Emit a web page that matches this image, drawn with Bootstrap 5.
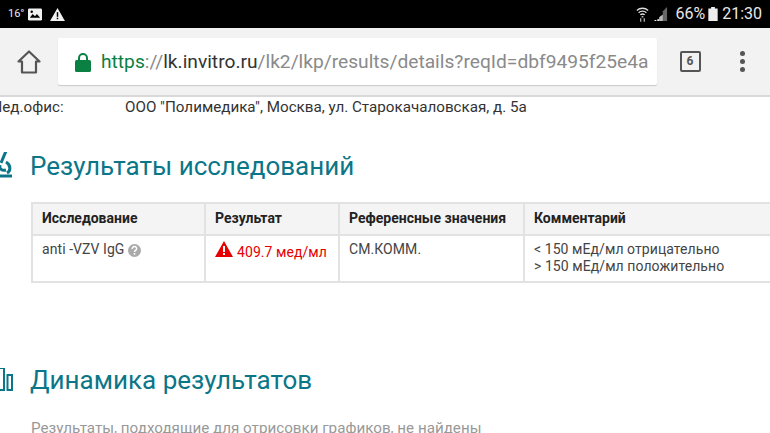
<!DOCTYPE html>
<html lang="ru">
<head>
  <meta charset="UTF-8">
  <meta name="viewport" content="width=device-width, initial-scale=1">
  <title>Результаты исследований</title>
  <link href="https://cdn.jsdelivr.net/npm/bootstrap@5.3.0/dist/css/bootstrap.min.css" rel="stylesheet">
  <style>
    html, body { height: 433px; overflow: hidden; }
    body { font-family: Roboto, "Liberation Sans", sans-serif; background: #fff; color: #333; }
    .status-bar { height: 28px; background: #000; color: #e8e8e8; padding: 0 8px 0 8px; }
    .status-temp { font-size: 11px; width: 20px; }
    .status-text { font-size: 16px; line-height: 28px; }
    .status-signal { margin-left: 5px; margin-right: 7px; }
    .status-batt { margin-left: 3px; }
    .browser-bar { height: 69px; background: #f2f2f2; border-bottom: 2px solid #d9d9d9; }
    .home-slot { width: 58px; }
    .url-box { width: 599px; height: 47px; background: #fff; border-radius: 2px; box-shadow: 0 1px 1px #c8c8c8; padding: 2px 9px 0 17px; white-space: nowrap; font-size: 19.2px; color: #8a8a8a; }
    .url-box svg { flex: none; margin-right: 10px; }
    .url-text { overflow: hidden; min-width: 0; }
    .url-https { color: #0b8043; }
    .url-host { color: #333; }
    .tab-slot { width: 66px; }
    .tab-count { width: 21px; height: 21px; border: 2px solid #555; border-radius: 2px; font-size: 12px; font-weight: 700; color: #555; line-height: 17px; }
    .menu-slot { width: 38px; }
    .menu-dots { gap: 3px; }
    .menu-dots i { display: block; width: 5px; height: 5px; border-radius: 50%; background: #555; }
    .office-line { height: 24px; font-size: 15.2px; line-height: 20px; color: #333; margin-left: -11px; white-space: nowrap; }
    .office-label { width: 136px; flex: none; }
    .section-title { font-size: 26px; font-weight: 400; line-height: 32px; color: #0a7688; margin: 0; }
    .section-head { gap: 17px; }
    .section-head svg { flex: none; }
    .head-one { margin-top: 29px; }
    .head-two { margin-top: 81px; }
    .results-table { margin: 20px 0 0 31px; width: 760px; table-layout: fixed; border-collapse: collapse; font-size: 14px; color: #444; }
    .results-table th, .results-table td { border: 2px solid #e2e2e2; padding: 4px 9px; vertical-align: top; }
    .results-table th { background: #f4f4f4; color: #222; font-weight: 700; height: 32px; }
    .results-table td { height: 47px; padding-top: 5px; line-height: 17px; letter-spacing: .07px; }
    .result-bad { color: #e60000; white-space: nowrap; }
    .result-bad svg { flex: none; }
    .result-bad span { margin-top: 3px; }
    .note-text { font-size: 15.2px; color: #999; margin: 22px 0 0 31px; line-height: 20px; }
  </style>
</head>
<body>

<div class="status-bar d-flex align-items-center">
  <span class="status-temp">16°</span>
  <svg width="14" height="13" viewBox="0 0 15 13"><rect width="15" height="13" rx="1.5" fill="#f2f2f2"/><path d="M2 10l3-4 2.500 2.500L9.500 6 13 10z" fill="#000"/><circle cx="4" cy="3.500" r="1.300" fill="#000"/></svg>
  <svg width="15" height="13" viewBox="0 0 16 14" class="ms-2"><path d="M8 0l8 14H0z" fill="#f2f2f2"/><rect x="7.200" y="4.500" width="1.600" height="5" fill="#000"/><rect x="7.200" y="10.500" width="1.600" height="1.600" fill="#000"/></svg>
  <div class="ms-auto d-flex align-items-center">
    <svg width="13" height="16" viewBox="0 0 15 18" fill="none" stroke="#ddd" stroke-width="1.500"><path d="M1 5c3.500-3.500 9.500-3.500 13 0M3 7.500c2.500-2.300 6.500-2.300 9 0M5 10c1.500-1.200 3.500-1.200 5 0"/><path d="M7.500 11.500v1.500" stroke-width="2"/><path d="M5.500 14v4M9.500 14v4" stroke-width="1.200"/></svg>
    <svg width="14" height="14" viewBox="0 0 14 15" class="status-signal"><path d="M13.500 0v15H9V4.500z" fill="#666"/><path d="M9 8v7H5v-4z" fill="#bbb"/><path d="M3 13h2v2H3zM0 14h2v1H0z" fill="#eee"/></svg>
    <span class="status-text">66%</span>
    <svg width="10" height="14" viewBox="0 0 10 15" class="status-batt"><path d="M3 0h4v1.500h3V15H0V1.500h3z" fill="#eee"/></svg>
    <span class="status-text ms-1">21:30</span>
  </div>
</div>

<div class="browser-bar d-flex align-items-center">
  <div class="home-slot d-flex justify-content-center">
    <svg width="24" height="24" viewBox="0 0 24 24" fill="none" stroke="#555" stroke-width="2.200" stroke-linejoin="round"><path d="M1.500 11.500L12 1.500l10.500 10H19v11H5v-11z"/></svg>
  </div>
  <div class="url-box d-flex align-items-center">
    <svg width="16" height="19" viewBox="0 0 16 19"><path d="M4 8V5a4 4 0 018 0v3" fill="none" stroke="#0b8043" stroke-width="2"/><rect y="7" width="16" height="12" rx="1.500" fill="#0b8043"/></svg>
    <span class="url-text"><span class="url-https">https</span>://<span class="url-host">lk.invitro.ru</span>/lk2/lkp/results/details?reqId=dbf9495f25e4a</span>
  </div>
  <div class="tab-slot d-flex justify-content-center">
    <div class="tab-count text-center">6</div>
  </div>
  <div class="menu-slot d-flex flex-column align-items-center menu-dots">
    <i></i><i></i><i></i>
  </div>
</div>

<div class="office-line d-flex">
  <span class="office-label">Мед.офис:</span>
  <span>ООО "Полимедика", Москва, ул. Старокачаловская, д. 5а</span>
</div>

<div class="section-head head-one d-flex align-items-center">
  <svg width="13" height="28" viewBox="0 2 13 28" fill="none" stroke="#0a7688" stroke-width="3"><path d="M6 1L1 13"/><path d="M6 12c5 3 5 9 1 11"/><path d="M0 15c-1 4 2 6 6 5"/><path d="M-1 26h13"/></svg>
  <h2 class="section-title">Результаты исследований</h2>
</div>

<table class="results-table">
  <colgroup><col style="width:173px"><col style="width:134px"><col style="width:185px"><col></colgroup>
  <thead>
    <tr><th>Исследование</th><th>Результат</th><th>Референсные значения</th><th>Комментарий</th></tr>
  </thead>
  <tbody>
    <tr>
      <td>anti -VZV IgG
        <svg width="13" height="13" viewBox="0 0 13 13"><circle cx="6.500" cy="6.500" r="6.500" fill="#aaa"/><path d="M4.300 5a2.200 2 0 114 .6c-.5.8-1.800 1-1.800 2.300" fill="none" stroke="#fff" stroke-width="1.500"/><rect x="5.700" y="9" width="1.600" height="1.700" fill="#fff"/></svg>
      </td>
      <td>
        <div class="result-bad d-flex align-items-start gap-1">
          <svg width="18" height="16" viewBox="0 0 18 16"><path d="M9 0l9 16H0z" fill="#e60000"/><rect x="8" y="5" width="2" height="6" fill="#fff"/><rect x="8" y="12" width="2" height="2" fill="#fff"/></svg>
          <span>409.7 мед/мл</span>
        </div>
      </td>
      <td>СМ.КОММ.</td>
      <td>&lt; 150 мЕд/мл отрицательно<br>&gt; 150 мЕд/мл положительно</td>
    </tr>
  </tbody>
</table>

<div class="section-head head-two d-flex align-items-center">
  <svg width="13" height="24" viewBox="0 1 13 24" fill="none" stroke="#0a7688" stroke-width="2"><rect x="-3" y="1" width="7" height="22"/><rect x="7.500" y="8" width="4.500" height="15"/></svg>
  <h2 class="section-title">Динамика результатов</h2>
</div>

<p class="note-text">Результаты, подходящие для отрисовки графиков, не найдены</p>

<script src="https://cdn.jsdelivr.net/npm/bootstrap@5.3.0/dist/js/bootstrap.bundle.min.js"></script>
</body>
</html>
